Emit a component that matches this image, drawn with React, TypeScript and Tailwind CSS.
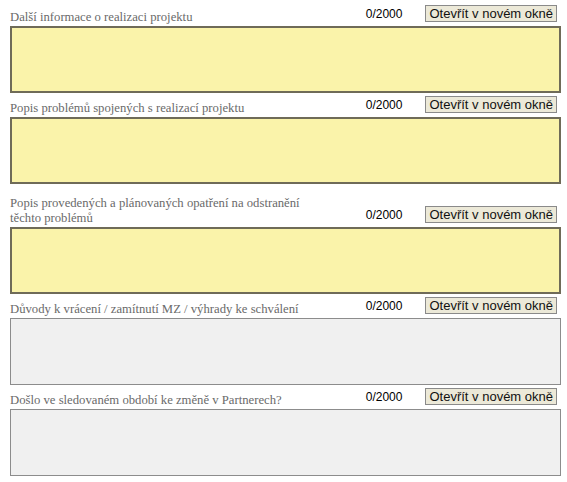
import React from "react";

type Field = {
  label: string;
  tone: "yellow" | "gray";
  tall?: boolean;
};

const FIELDS: Field[] = [
  { label: "Další informace o realizaci projektu", tone: "yellow" },
  { label: "Popis problémů spojených s realizací projektu", tone: "yellow" },
  {
    label: "Popis provedených a plánovaných opatření na odstranění těchto problémů",
    tone: "yellow",
    tall: true,
  },
  { label: "Důvody k vrácení / zamítnutí MZ / výhrady ke schválení", tone: "gray" },
  { label: "Došlo ve sledovaném období ke změně v Partnerech?", tone: "gray" },
];

function TextField({ label, tone, tall }: Field) {
  return (
    <div className="flex flex-col">
      <div className="flex items-end">
        <label
          className={`flex-1 pr-[40px] font-['Liberation_Serif',serif] text-[12.7px] leading-[15px] text-[#6a6a6a] ${
            tall ? "pt-[12px]" : "pt-[8px]"
          }`}
        >
          {label}
        </label>
        <div className="mb-[3px] mr-[4px] flex items-baseline gap-[23px] font-['Liberation_Sans',Arial,sans-serif]">
          <span className="text-[12px] leading-[15px] text-black">0/2000</span>
          <button
            type="button"
            className="border border-[#8a8a8a] bg-[#ece9d8] px-[3px] text-[13px] leading-[15px] text-[#111]"
          >
            Otevřít v novém okně
          </button>
        </div>
      </div>
      <textarea
        className={`mt-[1px] block h-[67px] w-full resize-none outline-none ${
          tone === "yellow"
            ? "border-2 border-[#6f6b58] bg-[#faf3aa]"
            : "border border-[#8c8c8c] bg-[#f0f0f0]"
        }`}
      />
    </div>
  );
}

export default function App() {
  return (
    <div className="min-h-[482px] w-[567px] bg-white pl-[10px] pr-[6px] pt-[2px]">
      {FIELDS.map((f) => (
        <TextField key={f.label} {...f} />
      ))}
    </div>
  );
}
